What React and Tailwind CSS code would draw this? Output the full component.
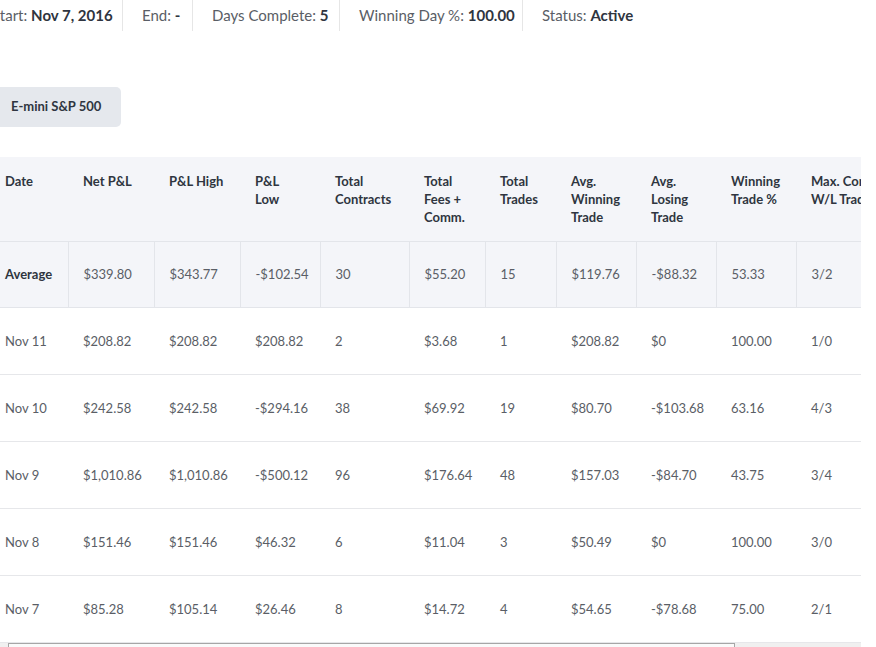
import React from "react";

const cols = [78, 86, 86, 80, 89, 76, 71, 80, 80, 80, 120];

const headers = [
  ["Date"],
  ["Net P&L"],
  ["P&L High"],
  ["P&L", "Low"],
  ["Total", "Contracts"],
  ["Total", "Fees +", "Comm."],
  ["Total", "Trades"],
  ["Avg.", "Winning", "Trade"],
  ["Avg.", "Losing", "Trade"],
  ["Winning", "Trade %"],
  ["Max. Consec.", "W/L Trades"],
];

const avg = ["Average", "$339.80", "$343.77", "-$102.54", "30", "$55.20", "15", "$119.76", "-$88.32", "53.33", "3/2"];

const rows = [
  ["Nov 11", "$208.82", "$208.82", "$208.82", "2", "$3.68", "1", "$208.82", "$0", "100.00", "1/0"],
  ["Nov 10", "$242.58", "$242.58", "-$294.16", "38", "$69.92", "19", "$80.70", "-$103.68", "63.16", "4/3"],
  ["Nov 9", "$1,010.86", "$1,010.86", "-$500.12", "96", "$176.64", "48", "$157.03", "-$84.70", "43.75", "3/4"],
  ["Nov 8", "$151.46", "$151.46", "$46.32", "6", "$11.04", "3", "$50.49", "$0", "100.00", "3/0"],
  ["Nov 7", "$85.28", "$105.14", "$26.46", "8", "$14.72", "4", "$54.65", "-$78.68", "75.00", "2/1"],
];

const stats = [
  { label: "Start:", value: "Nov 7, 2016", w: "w-[150px]" },
  { label: "End:", value: "-", w: "w-[70px]" },
  { label: "Days Complete:", value: "5", w: "w-[147px]" },
  { label: "Winning Day %:", value: "100.00", w: "w-[183px]" },
  { label: "Status:", value: "Active", w: "w-[200px]", last: true },
];

export default function App() {
  return (
    <div className="relative w-[876px] h-[647px] overflow-hidden bg-white font-['Lato',sans-serif]">
      <div className="flex h-[31px] -ml-[27px]">
        {stats.map((s, i) => (
          <div
            key={i}
            className={`${s.w} shrink-0 h-full flex items-center pl-[19px] text-[15px] ${s.last ? "" : "border-r border-[#e6e6e6]"}`}
          >
            <span className="text-[#5a5e66] whitespace-nowrap">{s.label}&nbsp;</span>
            <span className="text-[#2f3540] font-bold whitespace-nowrap">{s.value}</span>
          </div>
        ))}
      </div>

      <div className="mt-[56px] -ml-[9px]">
        <div className="inline-flex items-center h-[40px] px-[20px] rounded-[5px] bg-[#e5e8ed] text-[13px] font-bold text-[#2f3540]">
          E-mini S&amp;P 500
        </div>
      </div>

      <div className="mt-[30px] -ml-[10px] w-[871px] overflow-hidden">
        <table className="table-fixed border-collapse text-[13px]" style={{ width: cols.reduce((a, b) => a + b, 0) }}>
          <colgroup>
            {cols.map((w, i) => (
              <col key={i} style={{ width: w }} />
            ))}
          </colgroup>
          <thead>
            <tr className="bg-[#f4f5f9] h-[84px] border-b border-[#e3e5ea]">
              {headers.map((h, i) => (
                <th key={i} className="align-top text-left pl-[15px] pt-[15px] font-bold text-[#2f3540] leading-[18px]">
                  {h.map((l, j) => (
                    <div key={j} className="whitespace-nowrap">{l}</div>
                  ))}
                </th>
              ))}
            </tr>
          </thead>
          <tbody>
            <tr className="bg-[#f4f5f9] h-[66px] border-b border-[#e3e5ea]">
              {avg.map((c, i) => (
                <td
                  key={i}
                  className={`pl-[15px] pt-[2px] whitespace-nowrap ${i === 0 ? "font-bold text-[#2f3540]" : "text-[#5a5e66]"} ${i < avg.length - 1 ? "border-r border-[#e3e5ea]" : ""}`}
                >
                  {c}
                </td>
              ))}
            </tr>
            {rows.map((r, ri) => (
              <tr key={ri} className="h-[67px] border-b border-[#e6e7ea]">
                {r.map((c, i) => (
                  <td key={i} className="pl-[15px] pt-[2px] whitespace-nowrap text-[#5a5e66]">
                    {c}
                  </td>
                ))}
              </tr>
            ))}
          </tbody>
        </table>
        <div className="h-[15px] bg-[#f0f0f0] flex">
          <div className="ml-[18px] w-[727px] h-full bg-[#fafafa] border border-[#a6a6a6]"></div>
        </div>
      </div>
    </div>
  );
}
